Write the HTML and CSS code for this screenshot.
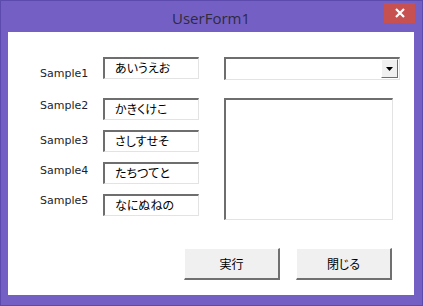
FILE: index.html
```html
<!DOCTYPE html>
<html lang="ja">
<head>
<meta charset="utf-8">
<title>UserForm1</title>
<link rel="stylesheet" href="styles.css">
</head>
<body>
<div class="window">
  <div class="titlebar">
    <span class="spacer"></span>
    <span class="title">UserForm1</span>
    <span class="close"><svg width="10" height="10" viewBox="0 0 10 10"><path d="M1 1L9 9M9 1L1 9" stroke="#fff" stroke-width="2.2" fill="none"/></svg></span>
  </div>
  <div class="client">
    <div class="top">
      <div class="fields">
        <div class="row"><span class="label l1">Sample1</span><span class="textbox">あいうえお</span></div>
        <div class="row r2"><span class="label l2">Sample2</span><span class="textbox">かきくけこ</span></div>
        <div class="row r3"><span class="label l3">Sample3</span><span class="textbox">さしすせそ</span></div>
        <div class="row r3"><span class="label l4">Sample4</span><span class="textbox">たちつてと</span></div>
        <div class="row r3"><span class="label l5">Sample5</span><span class="textbox">なにぬねの</span></div>
      </div>
      <div class="side">
        <div class="combo"><span class="combo-value"></span><span class="drop"><svg width="7" height="4" viewBox="0 0 7 4"><path d="M0 0H7L3.5 4Z" fill="#000"/></svg></span></div>
        <div class="listbox"></div>
      </div>
    </div>
    <div class="buttons">
      <span class="btn">実行</span>
      <span class="btn">閉じる</span>
    </div>
  </div>
</div>
</body>
</html>
```
FILE: styles.css
```css
html, body { margin: 0; padding: 0; background: #ffffff; }
.window {
  width: 423px;
  height: 306px;
  box-sizing: border-box;
  background: #7460c4;
  border: 1px solid #5c4aad;
  padding: 0 8px 10px 7px;
  display: flex;
  flex-direction: column;
}
.titlebar {
  height: 31px;
  display: grid;
  grid-template-columns: 1fr auto 1fr;
}
.title {
  font-family: "Open Sans", "Noto Sans", sans-serif;
  font-size: 15px;
  color: #2f2a3e;
  line-height: 15px;
  padding-top: 10px;
}
.close {
  justify-self: end;
  margin-top: 2px;
  margin-right: -1px;
  width: 31px;
  height: 20px;
  background: #c75050;
  display: flex;
  align-items: center;
  justify-content: center;
}
.close svg { display: block; }
.client {
  flex: 1;
  background: #ffffff;
  padding: 25px 22px 0 32px;
  box-sizing: border-box;
}
.top { display: flex; gap: 25px; height: 163px; }
.fields { display: flex; flex-direction: column; }
.row { display: flex; align-items: flex-start; }
.r2 { margin-top: 18px; }
.r3 { margin-top: 10px; }
.label {
  width: 63px;
  font-family: "DejaVu Sans", sans-serif;
  font-size: 11px;
  line-height: 13px;
  color: #1e1e2a;
}
.l1 { padding-top: 10px; }
.l2 { padding-top: 1px; }
.l3 { padding-top: 4px; }
.l4 { padding-top: 2px; }
.l5 { padding-top: 0; }
.textbox {
  width: 96px;
  height: 22px;
  box-sizing: border-box;
  border-top: 2px solid #6e6e6e;
  border-left: 2px solid #6e6e6e;
  border-right: 1px solid #e3e3e3;
  border-bottom: 1px solid #e3e3e3;
  padding-left: 10px;
  font-family: "Noto Sans CJK JP", sans-serif;
  font-feature-settings: "palt";
  font-size: 12px;
  line-height: 18px;
  color: #000;
}
.side { display: flex; flex-direction: column; }
.combo {
  width: 176px;
  height: 23px;
  box-sizing: border-box;
  border-top: 2px solid #6e6e6e;
  border-left: 2px solid #6e6e6e;
  border-right: 1px solid #e3e3e3;
  border-bottom: 1px solid #e3e3e3;
  display: flex;
  justify-content: flex-end;
  padding-right: 1px;
}
.drop {
  width: 17px;
  height: 19px;
  box-sizing: border-box;
  background: #f0f0f0;
  border-top: 1px solid #ffffff;
  border-left: 1px solid #ffffff;
  border-right: 1px solid #6e6e6e;
  border-bottom: 1px solid #6e6e6e;
  display: flex;
  align-items: center;
  justify-content: center;
}
.drop svg { display: block; }
.listbox {
  margin-top: 18px;
  width: 169px;
  height: 122px;
  box-sizing: border-box;
  border-top: 2px solid #6e6e6e;
  border-left: 2px solid #6e6e6e;
  border-right: 1px solid #e3e3e3;
  border-bottom: 1px solid #e3e3e3;
}
.buttons {
  margin-top: 28px;
  display: flex;
  padding-left: 144px;
  gap: 16px;
}
.btn {
  width: 96px;
  height: 32px;
  box-sizing: border-box;
  background: #f0f0f0;
  border-top: 1px solid #ffffff;
  border-left: 1px solid #ffffff;
  border-right: 2px solid #707070;
  border-bottom: 2px solid #707070;
  display: flex;
  align-items: center;
  justify-content: center;
  font-family: "Noto Sans CJK JP", sans-serif;
  font-feature-settings: "palt";
  font-size: 12px;
  color: #000;
}
```
